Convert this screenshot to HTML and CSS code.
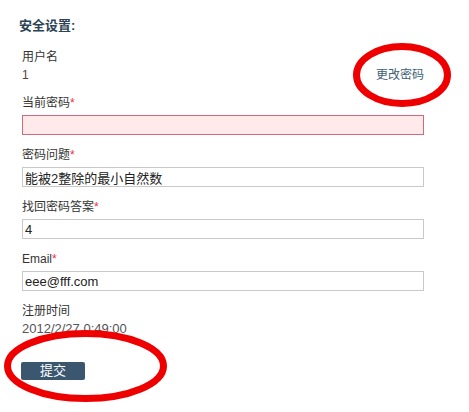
FILE: index.html
```html
<!DOCTYPE html>
<html lang="zh-CN">
<head>
<meta charset="utf-8">
<title>安全设置</title>
<link rel="stylesheet" href="styles.css">
</head>
<body>
<div class="panel">
  <h2 class="title">安全设置:</h2>

  <div class="field">
    <div class="label">用户名</div>
    <div class="row">
      <span class="value user">1</span>
      <a class="link" href="#">更改密码</a>
    </div>
  </div>

  <div class="field">
    <div class="label">当前密码<span class="req">*</span></div>
    <input class="input error" type="password">
  </div>

  <div class="field">
    <div class="label">密码问题<span class="req">*</span></div>
    <input class="input" type="text" value="能被2整除的最小自然数">
  </div>

  <div class="field">
    <div class="label">找回密码答案<span class="req">*</span></div>
    <input class="input" type="text" value="4">
  </div>

  <div class="field">
    <div class="label">Email<span class="req">*</span></div>
    <input class="input" type="text" value="eee@fff.com">
  </div>

  <div class="field last">
    <div class="label">注册时间</div>
    <div class="value date">2012/2/27 0:49:00</div>
  </div>

  <button class="submit" type="button">提交</button>
</div>

<svg class="marks" width="469" height="412" viewBox="0 0 469 412" aria-hidden="true">
  <ellipse cx="402" cy="75" rx="45.5" ry="28.5" fill="none" stroke="#ee0000" stroke-width="7"/>
  <ellipse cx="85.5" cy="366" rx="78" ry="32.5" fill="none" stroke="#ee0000" stroke-width="7"/>
</svg>
</body>
</html>
```

FILE: styles.css
```css
html, body {
  margin: 0;
  padding: 0;
  background: #ffffff;
}

body {
  font-family: "Liberation Sans", "Noto Sans CJK SC", sans-serif;
  font-size: 12px;
  color: #333333;
}

.panel {
  padding: 17px 0 0 22px;
  width: 402px;
}

.title {
  margin: 0 0 13px -3px;
  font-size: 13px;
  line-height: 18px;
  font-weight: bold;
  color: #2c4356;
}

.field {
  margin-bottom: 11px;
}

.field:first-of-type {
  margin-bottom: 10px;
}

.label {
  line-height: 18px;
  margin-bottom: 3px;
  color: #333333;
}

.field:first-of-type .label,
.field.last .label {
  margin-bottom: 0;
}

.req {
  color: #e8333c;
}

.row {
  display: flex;
  justify-content: space-between;
  align-items: baseline;
  line-height: 18px;
}

.value {
  line-height: 18px;
}

.user {
  color: #5b3b3b;
}

.date {
  font-size: 13px;
  color: #555555;
}

.link {
  color: #3e5f75;
  text-decoration: none;
}

.input {
  display: block;
  box-sizing: border-box;
  width: 402px;
  height: 20px;
  margin: 0;
  padding: 0 2px;
  border: 1px solid #c9c9c9;
  background: #ffffff;
  font-family: "Liberation Sans", "Noto Sans CJK SC", sans-serif;
  font-size: 13px;
  color: #222222;
  outline: none;
}

.input.error {
  border-color: #cf6b76;
  background: #ffe9ea;
}

.field.last {
  margin-bottom: 24px;
}

.submit {
  display: block;
  width: 64px;
  height: 18px;
  margin: 0 0 0 -1px;
  padding: 0;
  border: none;
  border-radius: 2px;
  background: #3b5770;
  color: #ffffff;
  font-family: "Liberation Sans", "Noto Sans CJK SC", sans-serif;
  font-size: 13px;
  line-height: 18px;
}

.marks {
  position: absolute;
  left: 0;
  top: 0;
  pointer-events: none;
}
```
